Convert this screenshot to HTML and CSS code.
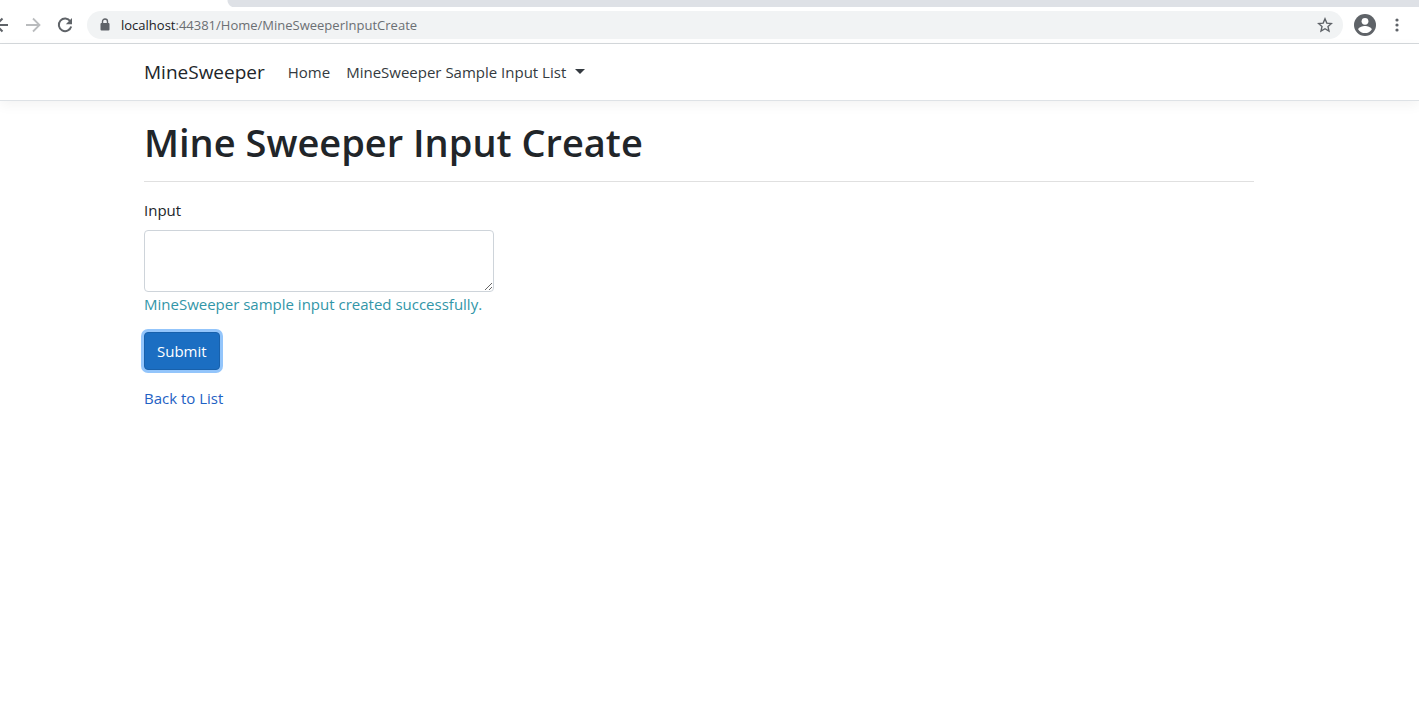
FILE: index.html
```html
<!DOCTYPE html>
<html lang="en">
<head>
<meta charset="utf-8">
<title>Mine Sweeper Input Create</title>
<link rel="stylesheet" href="styles.css">
</head>
<body>
<div class="browser">
  <div class="tab-strip"><div class="active-tab"></div></div>
  <div class="toolbar">
    <button class="tool back" type="button" aria-label="Back"><svg width="24" height="20" viewBox="0 0 24 20"><path d="M11 10h12M17.500 3.500L11 10l6.500 6.500" fill="none" stroke="#5f6368" stroke-width="2"/></svg></button>
    <button class="tool forward" type="button" aria-label="Forward"><svg width="16" height="16" viewBox="0 0 16 16"><path d="M1 8h13M8 1.500L14.500 8 8 14.500" fill="none" stroke="#babcbe" stroke-width="1.800"/></svg></button>
    <button class="tool reload" type="button" aria-label="Reload"><svg width="16" height="16" viewBox="0 0 16 16"><path d="M13.300 4.200A6.300 6.300 0 1 0 14.200 9.500" fill="none" stroke="#5f6368" stroke-width="2"/><path d="M15 1v6.200H8.800z" fill="#5f6368"/></svg></button>
    <div class="address">
      <svg width="10" height="14" viewBox="0 0 10 14"><path d="M2.500 6V3.500a2.500 2.500 0 0 1 5 0V6" fill="none" stroke="#5f6368" stroke-width="1.400"/><rect x=".5" y="5" width="9" height="7.500" rx="1" fill="#5f6368"/></svg>
      <div class="url"><span class="host">localhost</span>:44381/Home/MineSweeperInputCreate</div>
      <button class="tool" type="button" aria-label="Bookmark"><svg width="16" height="16" viewBox="0 0 16 16"><path d="M8 1.800l1.800 4.300 4.700.4-3.500 3.100 1 4.500L8 11.700l-4 2.400 1-4.500-3.500-3.100 4.700-.4z" fill="none" stroke="#5f6368" stroke-width="1.400"/></svg></button>
    </div>
    <button class="tool profile" type="button" aria-label="Profile"><svg width="22" height="22" viewBox="0 0 22 22"><circle cx="11" cy="11" r="11" fill="#5f6368"/><circle cx="11" cy="7.300" r="3.400" fill="#fff"/><path d="M4.200 15.500c0-2.400 4.500-3.600 6.800-3.600s6.800 1.200 6.800 3.600a8.200 8.200 0 0 1-13.600 0z" fill="#fff"/></svg></button>
    <button class="tool menu" type="button" aria-label="Menu"><svg width="4" height="14" viewBox="0 0 4 14" fill="#5f6368"><circle cx="2" cy="2" r="1.600"/><circle cx="2" cy="7" r="1.600"/><circle cx="2" cy="12" r="1.600"/></svg></button>
  </div>
</div>
<header class="navbar">
  <nav class="container nav-row">
    <a class="brand" href="#">MineSweeper</a>
    <a class="nav-link" href="#">Home</a>
    <a class="nav-link dropdown" href="#">MineSweeper Sample Input List</a>
  </nav>
</header>
<main class="container">
  <h1 class="title">Mine Sweeper Input Create</h1>
  <hr class="rule">
  <form class="form">
    <label class="label" for="input">Input</label>
    <textarea class="field" id="input" rows="2"></textarea>
    <div class="success">MineSweeper sample input created successfully.</div>
    <button class="submit" type="button">Submit</button>
  </form>
  <a class="back-link" href="#">Back to List</a>
</main>
</body>
</html>
```
FILE: styles.css
```css
* { box-sizing: border-box; }
body {
  margin: 0;
  background: #fff;
  color: #212529;
  font: 15px/24px "Open Sans", "Noto Sans", sans-serif;
}
a { text-decoration: none; }

.browser { border-bottom: 1px solid #d5d9dc; }
.tab-strip { height: 7px; background: #dee1e6; }
.active-tab {
  width: 235px;
  height: 7px;
  background: radial-gradient(circle at 100% 0, #dee1e6 7px, #fff 8px);
}
.toolbar {
  display: flex;
  align-items: center;
  height: 36px;
}
.tool {
  display: flex;
  flex: none;
  padding: 0;
  border: 0;
  background: none;
}
.back { margin-left: -15px; }
.forward { margin-left: 16px; }
.reload { margin: 0 14px 0 16px; }
.address {
  flex: 1;
  display: flex;
  align-items: center;
  height: 28px;
  padding: 0 10px 0 13px;
  border-radius: 14px;
  background: #f1f3f4;
}
.url {
  flex: 1;
  padding-left: 11px;
  font-size: 13px;
  color: #6b6f73;
}
.host { color: #202124; }
.profile { margin-left: 11px; }
.menu { margin: 0 20px 0 19px; }

.navbar {
  padding: 8px 21px 8px 0;
  border-bottom: 1px solid #dee2e6;
  box-shadow: 0 4px 12px rgba(0, 0, 0, .05);
}
.container {
  max-width: 1140px;
  margin: 0 auto;
  padding: 0 15px;
}
main.container {
  max-width: 1161px;
  padding: 16px 36px 16px 15px;
}
.nav-row {
  display: flex;
  align-items: center;
  height: 40px;
}
.brand {
  margin-right: 15px;
  font-size: 19px;
  line-height: 30px;
  color: #212529;
}
.nav-link {
  padding: 8px;
  color: #343a40;
}
.dropdown::after {
  content: "";
  display: inline-block;
  margin-left: 9px;
  vertical-align: 4px;
  border: 5px solid transparent;
  border-top-color: #343a40;
  border-bottom: 0;
}
.title {
  margin: 0;
  font-size: 38px;
  font-weight: 600;
  line-height: 50px;
}
.rule {
  margin: 14px 0 16px;
  border: 0;
  border-top: 1px solid #e0e0e0;
}
.form {
  display: flex;
  flex-direction: column;
  align-items: flex-start;
  max-width: 350px;
}
.label { margin-bottom: 8px; }
.field {
  width: 100%;
  height: 62px;
  padding: 6px 12px;
  border: 1px solid #ced4da;
  border-radius: 4px;
  font: inherit;
}
.success {
  margin-bottom: 16px;
  color: #3296a8;
  white-space: nowrap;
}
.submit {
  margin-bottom: 16px;
  padding: 6px 12px;
  border: 1px solid #1861ac;
  border-radius: 4px;
  background: #1b6ec2;
  color: #fff;
  font: inherit;
  box-shadow: 0 0 0 3px #93c5fb;
}
.back-link { color: #1f62c4; }
```
